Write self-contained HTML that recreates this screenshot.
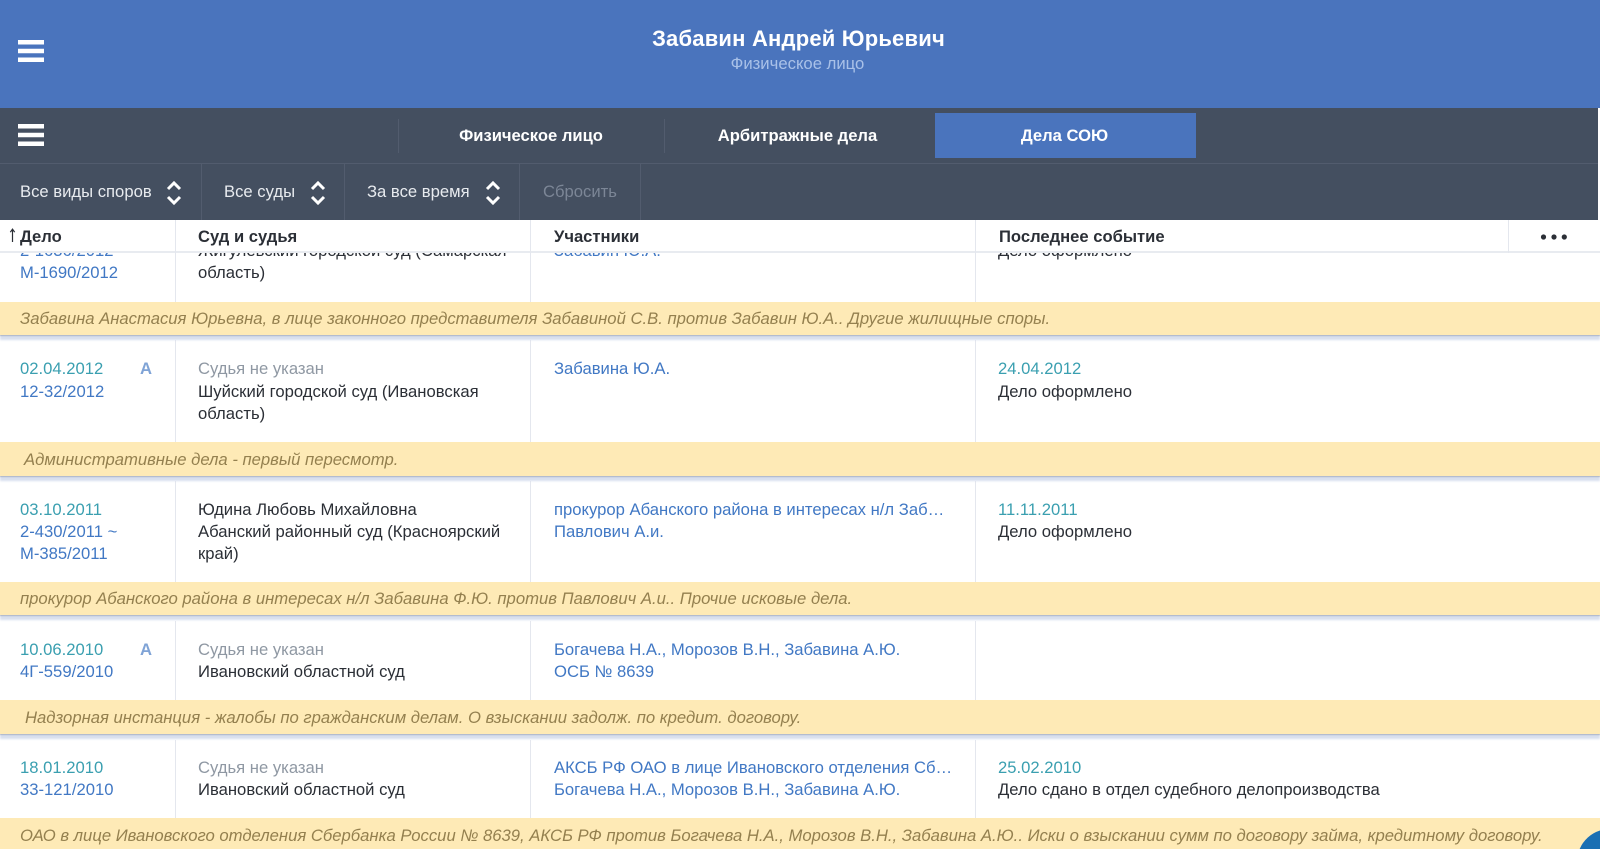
<!DOCTYPE html>
<html lang="ru"><head><meta charset="utf-8"><title>Забавин Андрей Юрьевич</title>
<style>
html,body{margin:0;padding:0;width:1600px;height:849px;overflow:hidden;background:#fff}
body{position:relative;font-family:"Liberation Sans",sans-serif;font-size:16.65px;color:#2b2f36}
div,span{position:absolute;white-space:nowrap}
.t{line-height:22px;height:22px;font-size:16.65px}
.d{color:#3a9fb0}.n,.p{color:#4178c4}.g{color:#8f98a3}.b{color:#2b2f36}
.a{color:#7fa3d6;font-weight:bold}
.y{left:0;width:1600px;background:#feeab6;box-shadow:0 1px 1px #aab4c8,0 5px 2px #d8dfee}
.yt{line-height:22px;height:22px;font-size:16.67px;font-style:italic;color:#94804f}
.v{width:1px;background:#e4e7ee}
.w{left:0;width:1600px;background:#fff}
.h{font-weight:bold;color:#2b2f36;line-height:22px;height:22px;font-size:16.6px}
.f{color:#e8ebef;line-height:22px;height:22px;font-size:16.65px}
.nv{color:#fff;font-weight:bold;line-height:22px;height:22px;font-size:16.6px;text-align:center}
.sep{background:#525c6e;width:1px}
svg{position:absolute}
#page{left:0;top:0;width:1600px;height:849px;overflow:hidden}
</style></head><body><div id="page">

<div class="w" style="top:253px;height:596px"></div>

<!-- vertical column lines -->
<div class="v" style="left:175px;top:253px;height:49px"></div><div class="v" style="left:530px;top:253px;height:49px"></div><div class="v" style="left:975px;top:253px;height:49px"></div>
<div class="v" style="left:175px;top:340px;height:102px"></div><div class="v" style="left:530px;top:340px;height:102px"></div><div class="v" style="left:975px;top:340px;height:102px"></div>
<div class="v" style="left:175px;top:481px;height:101px"></div><div class="v" style="left:530px;top:481px;height:101px"></div><div class="v" style="left:975px;top:481px;height:101px"></div>
<div class="v" style="left:175px;top:621px;height:80px"></div><div class="v" style="left:530px;top:621px;height:80px"></div><div class="v" style="left:975px;top:621px;height:80px"></div>
<div class="v" style="left:175px;top:740px;height:78px"></div><div class="v" style="left:530px;top:740px;height:78px"></div><div class="v" style="left:975px;top:740px;height:78px"></div>

<!-- row 0 -->
<div class="t p" style="left:20px;top:240px">2-1636/2012</div>
<div class="t p" style="left:20px;top:262px">М-1690/2012</div>
<div class="t b" style="left:198px;top:240px">Жигулевский городской суд (Самарская</div>
<div class="t b" style="left:198px;top:262px">область)</div>
<div class="t p" style="left:554px;top:240px">Забавин Ю.А.</div>
<div class="t b" style="left:998px;top:240px">Дело оформлено</div>
<div class="y" style="top:302px;height:33px"></div>
<div class="yt" style="left:20px;top:308px">Забавина Анастасия Юрьевна, в лице законного представителя Забавиной С.В. против Забавин Ю.А.. Другие жилищные споры.</div>

<!-- row 1 -->
<div class="t d" style="left:20px;top:358px">02.04.2012</div><div class="t a" style="left:140px;top:358px">А</div>
<div class="t p" style="left:20px;top:381px">12-32/2012</div>
<div class="t g" style="left:198px;top:358px">Судья не указан</div>
<div class="t b" style="left:198px;top:381px">Шуйский городской суд (Ивановская</div>
<div class="t b" style="left:198px;top:403px">область)</div>
<div class="t p" style="left:554px;top:358px">Забавина Ю.А.</div>
<div class="t d" style="left:998px;top:358px">24.04.2012</div>
<div class="t b" style="left:998px;top:381px">Дело оформлено</div>
<div class="y" style="top:442px;height:34px"></div>
<div class="yt" style="left:24px;top:449px">Административные дела - первый пересмотр.</div>

<!-- row 2 -->
<div class="t d" style="left:20px;top:499px">03.10.2011</div>
<div class="t p" style="left:20px;top:521px">2-430/2011 ~</div>
<div class="t p" style="left:20px;top:543px">М-385/2011</div>
<div class="t b" style="left:198px;top:499px">Юдина Любовь Михайловна</div>
<div class="t b" style="left:198px;top:521px">Абанский районный суд (Красноярский</div>
<div class="t b" style="left:198px;top:543px">край)</div>
<div class="t p" style="left:554px;top:499px">прокурор Абанского района в интересах н/л Заб…</div>
<div class="t p" style="left:554px;top:521px">Павлович А.и.</div>
<div class="t d" style="left:998px;top:499px">11.11.2011</div>
<div class="t b" style="left:998px;top:521px">Дело оформлено</div>
<div class="y" style="top:582px;height:33px"></div>
<div class="yt" style="left:20px;top:588px">прокурор Абанского района в интересах н/л Забавина Ф.Ю. против Павлович А.и.. Прочие исковые дела.</div>

<!-- row 3 -->
<div class="t d" style="left:20px;top:639px">10.06.2010</div><div class="t a" style="left:140px;top:639px">А</div>
<div class="t p" style="left:20px;top:661px">4Г-559/2010</div>
<div class="t g" style="left:198px;top:639px">Судья не указан</div>
<div class="t b" style="left:198px;top:661px">Ивановский областной суд</div>
<div class="t p" style="left:554px;top:639px">Богачева Н.А., Морозов В.Н., Забавина А.Ю.</div>
<div class="t p" style="left:554px;top:661px">ОСБ № 8639</div>
<div class="y" style="top:700px;height:34px"></div>
<div class="yt" style="left:25px;top:707px">Надзорная инстанция - жалобы по гражданским делам. О взыскании задолж. по кредит. договору.</div>

<!-- row 4 -->
<div class="t d" style="left:20px;top:757px">18.01.2010</div>
<div class="t p" style="left:20px;top:779px">33-121/2010</div>
<div class="t g" style="left:198px;top:757px">Судья не указан</div>
<div class="t b" style="left:198px;top:779px">Ивановский областной суд</div>
<div class="t p" style="left:554px;top:757px">АКСБ РФ ОАО в лице Ивановского отделения Сб…</div>
<div class="t p" style="left:554px;top:779px">Богачева Н.А., Морозов В.Н., Забавина А.Ю.</div>
<div class="t d" style="left:998px;top:757px">25.02.2010</div>
<div class="t b" style="left:998px;top:779px">Дело сдано в отдел судебного делопроизводства</div>
<div class="y" style="top:818px;height:31px;box-shadow:none"></div>
<div class="yt" style="left:20px;top:825px">ОАО в лице Ивановского отделения Сбербанка России № 8639, АКСБ РФ против Богачева Н.А., Морозов В.Н., Забавина А.Ю.. Иски о взыскании сумм по договору займа, кредитному договору.</div>
<svg style="left:1570px;top:825px" width="30" height="24" viewBox="0 0 30 24"><path d="M30 5.55A33 33 0 0 0 9.67 24H30Z" fill="#1a6fb3"/></svg>

<!-- table head -->
<div style="left:0;top:220px;width:1600px;height:33px;background:#fff;border-bottom:2px solid #e8ebf0;box-sizing:border-box"></div>
<div class="v" style="left:175px;top:220px;height:33px"></div><div class="v" style="left:530px;top:220px;height:33px"></div><div class="v" style="left:975px;top:220px;height:33px"></div><div class="v" style="left:1508px;top:220px;height:33px"></div>
<svg style="left:9px;top:228px" width="7" height="16" viewBox="0 0 7 16"><path d="M3.5 14V1.5M1.3 4.2L3.5 1.2L5.7 4.2" fill="none" stroke="#2b2f36" stroke-width="1.2"/></svg>
<div class="h" style="left:20px;top:226px">Дело</div>
<div class="h" style="left:198px;top:226px">Суд и судья</div>
<div class="h" style="left:554px;top:226px">Участники</div>
<div class="h" style="left:999px;top:226px">Последнее событие</div>
<svg style="left:1540px;top:232px" width="28" height="10" viewBox="0 0 28 10"><circle cx="3.5" cy="5" r="2.6" fill="#2b2f36"/><circle cx="14" cy="5" r="2.6" fill="#2b2f36"/><circle cx="24.3" cy="5" r="2.6" fill="#2b2f36"/></svg>

<!-- top header -->
<div style="left:0;top:0;width:1600px;height:108px;background:#4a74bd"></div>
<svg style="left:18px;top:40px" width="26" height="22" viewBox="0 0 26 22"><path d="M0 0H26V4.5H0ZM0 8.7H26V13.2H0ZM0 17.5H26V22H0Z" fill="#fff"/></svg>
<div style="left:0;width:1597px;top:27px;height:24px;text-align:center;color:#fff;font-weight:bold;font-size:22px;line-height:24px;letter-spacing:.2px">Забавин Андрей Юрьевич</div>
<div style="left:0;width:1595px;top:53px;height:22px;text-align:center;color:#a9c1e8;font-size:16.7px;line-height:22px">Физическое лицо</div>

<!-- nav -->
<div style="left:0;top:108px;width:1598px;height:112px;background:#444f60"></div>
<div style="left:0;top:163px;width:1598px;height:1px;background:#525c6e"></div>
<svg style="left:18px;top:124px" width="26" height="22" viewBox="0 0 26 22"><path d="M0 0H26V4.5H0ZM0 8.7H26V13.2H0ZM0 17.5H26V22H0Z" fill="#fff"/></svg>
<div class="sep" style="left:398px;top:119px;height:34px"></div>
<div class="sep" style="left:664px;top:119px;height:34px"></div>
<div style="left:935px;top:113px;width:261px;height:45px;background:#4a74bd"></div>
<div class="nv" style="left:399px;width:264px;top:125px">Физическое лицо</div>
<div class="nv" style="left:665px;width:265px;top:125px">Арбитражные дела</div>
<div class="nv" style="left:935px;width:259px;top:125px">Дела СОЮ</div>

<!-- filters -->
<div class="sep" style="left:201px;top:164px;height:56px"></div>
<div class="sep" style="left:344px;top:164px;height:56px"></div>
<div class="sep" style="left:519px;top:164px;height:56px"></div>
<div class="sep" style="left:640px;top:164px;height:56px"></div>
<div class="f" style="left:20px;top:181px">Все виды споров</div>
<div class="f" style="left:224px;top:181px">Все суды</div>
<div class="f" style="left:367px;top:181px">За все время</div>
<div class="f" style="left:543px;top:181px;color:#7c8696">Сбросить</div>
<svg style="left:165px;top:180px" width="18" height="25" viewBox="0 0 18 25"><path d="M3 9L9 3L15 9M3 17L9 23L15 17" fill="none" stroke="#fff" stroke-width="3"/></svg>
<svg style="left:309px;top:180px" width="18" height="25" viewBox="0 0 18 25"><path d="M3 9L9 3L15 9M3 17L9 23L15 17" fill="none" stroke="#fff" stroke-width="3"/></svg>
<svg style="left:484px;top:180px" width="18" height="25" viewBox="0 0 18 25"><path d="M3 9L9 3L15 9M3 17L9 23L15 17" fill="none" stroke="#fff" stroke-width="3"/></svg>

</div></body></html>
